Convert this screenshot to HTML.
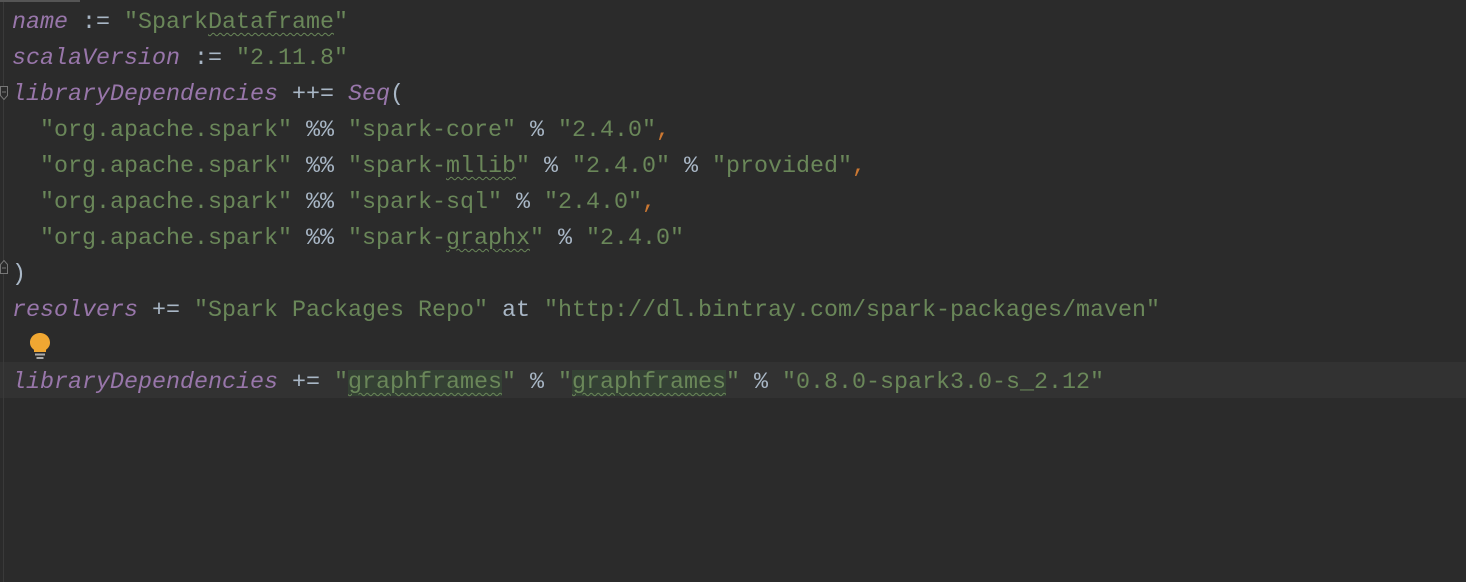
<!DOCTYPE html>
<html><head><style>
html,body{margin:0;padding:0;background:#2b2b2b;width:1466px;height:582px;overflow:hidden}
.ed{position:absolute;left:12px;top:5px;font-family:"Liberation Mono",monospace;font-size:23.33px;line-height:36px;color:#a9b7c6;white-space:pre}
.v{color:#9876aa;font-style:italic}
.s{color:#6a8759}
.c{color:#cc7832}
.w{text-decoration:underline wavy #6a8759;text-decoration-thickness:1px;text-underline-offset:4px}
.h{background:#344134}
.cur{position:absolute;left:0;top:362px;width:1466px;height:36px;background:#323232}
.gut{position:absolute;left:3px;top:0;width:1px;height:582px;background:#3a3a3a}
.top{position:absolute;left:0;top:0;width:80px;height:2px;background:#555}
.bulb{position:absolute;left:28px;top:332px}
.fold{position:absolute;left:0;width:8px;height:14px}
</style></head><body>
<div class="cur"></div>
<div class="gut"></div>
<div class="top"></div>
<svg class="fold" style="top:86px" viewBox="0 0 8 14"><path d="M0.5 0.5H7.5V9.5L4 13.5L0.5 9.5Z" fill="#2b2b2b" stroke="#777"/><path d="M2 6H6" stroke="#777"/></svg>
<svg class="fold" style="top:260px" viewBox="0 0 8 14"><path d="M0.5 13.5H7.5V4.5L4 0.5L0.5 4.5Z" fill="#2b2b2b" stroke="#777"/><path d="M2 8H6" stroke="#777"/></svg>
<svg class="bulb" width="24" height="30" viewBox="0 0 24 30"><path d="M12 1C6.5 1 2 5.2 2 10.5c0 3.4 1.7 5.6 4 7.2V20h12v-2.3c2.3-1.6 4-3.8 4-7.2C22 5.2 17.5 1 12 1z" fill="#f0a732"/><rect x="7" y="21.5" width="10" height="2" fill="#aaa"/><rect x="8.5" y="25" width="7" height="2" fill="#aaa"/></svg>
<div class="ed"><span class="v">name</span> := <span class="s">"Spark<span class="w">Dataframe</span>"</span>
<span class="v">scalaVersion</span> := <span class="s">"2.11.8"</span>
<span class="v">libraryDependencies</span> ++= <span class="v">Seq</span>(
  <span class="s">"org.apache.spark"</span> %% <span class="s">"spark-core"</span> % <span class="s">"2.4.0"</span><span class="c">,</span>
  <span class="s">"org.apache.spark"</span> %% <span class="s">"spark-<span class="w">mllib</span>"</span> % <span class="s">"2.4.0"</span> % <span class="s">"provided"</span><span class="c">,</span>
  <span class="s">"org.apache.spark"</span> %% <span class="s">"spark-sql"</span> % <span class="s">"2.4.0"</span><span class="c">,</span>
  <span class="s">"org.apache.spark"</span> %% <span class="s">"spark-<span class="w">graphx</span>"</span> % <span class="s">"2.4.0"</span>
)
<span class="v">resolvers</span> += <span class="s">"Spark Packages Repo"</span> at <span class="s">"http://dl.bintray.com/spark-packages/maven"</span>

<span class="v">libraryDependencies</span> += <span class="s">"<span class="w h">graphframes</span>"</span> % <span class="s">"<span class="w h">graphframes</span>"</span> % <span class="s">"0.8.0-spark3.0-s_2.12"</span></div>
</body></html>
